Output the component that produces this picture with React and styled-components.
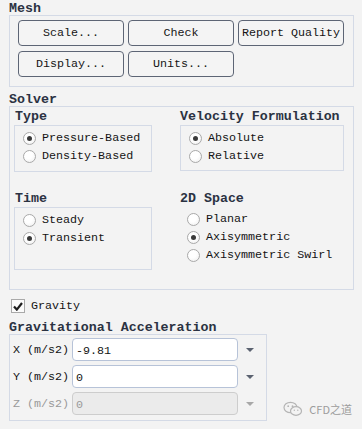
import React, { useState } from "react";
import styled, { createGlobalStyle } from "styled-components";

const GlobalStyle = createGlobalStyle`
  html, body {
    margin: 0;
    padding: 0;
    background: #f3f3f3;
  }
  body {
    font-family: "Liberation Mono", "DejaVu Sans Mono", monospace;
    font-size: 11.7px;
    color: #141414;
  }
`;

const Page = styled.div`
  position: relative;
  width: 362px;
  height: 429px;
  box-sizing: border-box;
  padding: 2px 9px 0 9px;
  overflow: hidden;
`;

const Heading = styled.div`
  font-weight: 700;
  font-size: 13.3px;
  line-height: 13px;
  height: 13px;
  color: #2b3242;
  margin-left: ${(p) => p.indent || 0}px;
`;

const Spacer = styled.div`
  height: ${(p) => p.size}px;
`;

const GroupBox = styled.div`
  border: 1px solid #d4dae6;
  box-sizing: border-box;
  width: ${(p) => p.width}px;
  height: ${(p) => p.height}px;
  padding: ${(p) => p.pad || "0"};
`;

const ButtonGrid = styled.div`
  display: grid;
  grid-template-columns: 106px 106px 106px;
  grid-auto-rows: 26px;
  column-gap: 4px;
  row-gap: 5px;
`;

const Button = styled.button`
  font-family: inherit;
  font-size: 11.7px;
  color: #141414;
  background: #f4f4f4;
  border: 1px solid #5d6575;
  border-radius: 4px;
  padding: 0;
  margin: 0;
`;

const SolverGrid = styled.div`
  display: grid;
  grid-template-columns: 166px 1fr;
  grid-template-rows: 82px auto;
`;

const Cell = styled.div`
  display: flex;
  flex-direction: column;
  gap: 2px;
`;

const SubBox = styled.div`
  border: 1px solid #d4dae6;
  box-sizing: border-box;
  width: ${(p) => p.width}px;
  height: ${(p) => p.height}px;
  padding: 3px 0 0 8px;
  display: flex;
  flex-direction: column;
`;

const Options = styled.div`
  display: flex;
  flex-direction: column;
  padding: 3px 0 0 7px;
`;

const RadioRow = styled.label`
  display: flex;
  align-items: center;
  height: 18px;
  gap: 6px;
  cursor: pointer;
  white-space: nowrap;
`;

const RadioDot = styled.span`
  width: 13px;
  height: 13px;
  box-sizing: border-box;
  border-radius: 50%;
  border: 1px solid #a9a9a9;
  background: radial-gradient(circle at 40% 35%, #ffffff 40%, #ececec 100%);
  display: flex;
  align-items: center;
  justify-content: center;
  flex-shrink: 0;
  &::after {
    content: "";
    width: 5px;
    height: 5px;
    border-radius: 50%;
    background: #3a3a3a;
    display: ${(p) => (p.checked ? "block" : "none")};
  }
`;

const CheckRow = styled.label`
  display: flex;
  align-items: center;
  gap: 6px;
  height: 14px;
  margin: 9px 0 0 2px;
  cursor: pointer;
`;

const CheckBox = styled.span`
  width: 14px;
  height: 14px;
  box-sizing: border-box;
  border: 1px solid #a9a9a9;
  background: #fbfbfb;
  display: flex;
  align-items: center;
  justify-content: center;
`;

const AccelBox = styled.div`
  border: 1px solid #d4dae6;
  box-sizing: border-box;
  width: 258px;
  height: 87px;
  padding: 3px 0 0 3px;
  display: flex;
  flex-direction: column;
  gap: 4px;
`;

const FieldRow = styled.div`
  display: flex;
  align-items: center;
  height: 23px;
  color: ${(p) => (p.disabled ? "#9a9a9a" : "#141414")};
`;

const FieldLabel = styled.span`
  width: 59px;
  white-space: nowrap;
`;

const Field = styled.input`
  width: 166px;
  height: 23px;
  box-sizing: border-box;
  border: 1px solid ${(p) => (p.disabled ? "#cdcdcd" : "#b7c3d8")};
  border-radius: 4px;
  background: ${(p) => (p.disabled ? "#ebebeb" : "#ffffff")};
  font-family: inherit;
  font-size: 11.7px;
  color: ${(p) => (p.disabled ? "#9a9a9a" : "#141414")};
  padding: 3px 0 0 3px;
  margin: 0;
  outline: none;
`;

const Arrow = styled.span`
  margin-left: 8px;
  width: 0;
  height: 0;
  border-left: 4px solid transparent;
  border-right: 4px solid transparent;
  border-top: 4px solid ${(p) => (p.disabled ? "#a8a8a8" : "#5b6270")};
`;

const Watermark = styled.div`
  position: absolute;
  right: 10px;
  bottom: 12px;
  display: flex;
  align-items: center;
  gap: 6px;
  font-family: "Noto Sans CJK SC", "Noto Sans", sans-serif;
  font-size: 11px;
  color: #9c9c9c;
`;

function Radio({ label, checked, onChange }) {
  return (
    <RadioRow onClick={onChange}>
      <RadioDot checked={checked} />
      {label}
    </RadioRow>
  );
}

function App() {
  const [type, setType] = useState("pressure");
  const [velocity, setVelocity] = useState("absolute");
  const [time, setTime] = useState("transient");
  const [space, setSpace] = useState("axi");
  const [gravity, setGravity] = useState(true);

  return (
    <Page>
      <GlobalStyle />
      <Heading>Mesh</Heading>
      <GroupBox width={345} height={72} pad="4px 0 0 8px">
        <ButtonGrid>
          <Button>Scale...</Button>
          <Button>Check</Button>
          <Button>Report Quality</Button>
          <Button>Display...</Button>
          <Button>Units...</Button>
        </ButtonGrid>
      </GroupBox>

      <Spacer size={6} />
      <Heading>Solver</Heading>
      <GroupBox width={345} height={184} pad="3px 0 0 4px">
        <SolverGrid>
          <Cell>
            <Heading indent={1}>Type</Heading>
            <SubBox width={138} height={47}>
              <Radio
                label="Pressure-Based"
                checked={type === "pressure"}
                onChange={() => setType("pressure")}
              />
              <Radio
                label="Density-Based"
                checked={type === "density"}
                onChange={() => setType("density")}
              />
            </SubBox>
          </Cell>
          <Cell>
            <Heading>Velocity Formulation</Heading>
            <SubBox width={164} height={46}>
              <Radio
                label="Absolute"
                checked={velocity === "absolute"}
                onChange={() => setVelocity("absolute")}
              />
              <Radio
                label="Relative"
                checked={velocity === "relative"}
                onChange={() => setVelocity("relative")}
              />
            </SubBox>
          </Cell>
          <Cell>
            <Heading indent={1}>Time</Heading>
            <SubBox width={138} height={63}>
              <Radio
                label="Steady"
                checked={time === "steady"}
                onChange={() => setTime("steady")}
              />
              <Radio
                label="Transient"
                checked={time === "transient"}
                onChange={() => setTime("transient")}
              />
            </SubBox>
          </Cell>
          <Cell>
            <Heading>2D Space</Heading>
            <Options>
              <Radio
                label="Planar"
                checked={space === "planar"}
                onChange={() => setSpace("planar")}
              />
              <Radio
                label="Axisymmetric"
                checked={space === "axi"}
                onChange={() => setSpace("axi")}
              />
              <Radio
                label="Axisymmetric Swirl"
                checked={space === "swirl"}
                onChange={() => setSpace("swirl")}
              />
            </Options>
          </Cell>
        </SolverGrid>
      </GroupBox>

      <CheckRow onClick={() => setGravity(!gravity)}>
        <CheckBox>
          {gravity && (
            <svg width="10" height="9" viewBox="0 0 10 9">
              <path
                d="M1 4.6 L3.8 7.6 L9 1"
                fill="none"
                stroke="#1e1e1e"
                strokeWidth="2.2"
              />
            </svg>
          )}
        </CheckBox>
        Gravity
      </CheckRow>

      <Spacer size={8} />
      <Heading>Gravitational Acceleration</Heading>
      <AccelBox>
        <FieldRow>
          <FieldLabel>X (m/s2)</FieldLabel>
          <Field defaultValue="-9.81" />
          <Arrow />
        </FieldRow>
        <FieldRow>
          <FieldLabel>Y (m/s2)</FieldLabel>
          <Field defaultValue="0" />
          <Arrow />
        </FieldRow>
        <FieldRow disabled>
          <FieldLabel>Z (m/s2)</FieldLabel>
          <Field defaultValue="0" disabled />
          <Arrow disabled />
        </FieldRow>
      </AccelBox>

      <Watermark>
        <svg width="20" height="16" viewBox="0 0 20 16">
          <ellipse cx="7.5" cy="6.5" rx="6.5" ry="5.2" fill="none" stroke="#b5b5b5" strokeWidth="1.2" />
          <ellipse cx="13" cy="10" rx="5.5" ry="4.3" fill="#f3f3f3" stroke="#b5b5b5" strokeWidth="1.2" />
          <circle cx="5.2" cy="5.2" r="0.9" fill="#b5b5b5" />
          <circle cx="9.5" cy="5.2" r="0.9" fill="#b5b5b5" />
          <circle cx="11.3" cy="9.3" r="0.7" fill="#b5b5b5" />
          <circle cx="14.8" cy="9.3" r="0.7" fill="#b5b5b5" />
        </svg>
        CFD之道
      </Watermark>
    </Page>
  );
}

export default App;
